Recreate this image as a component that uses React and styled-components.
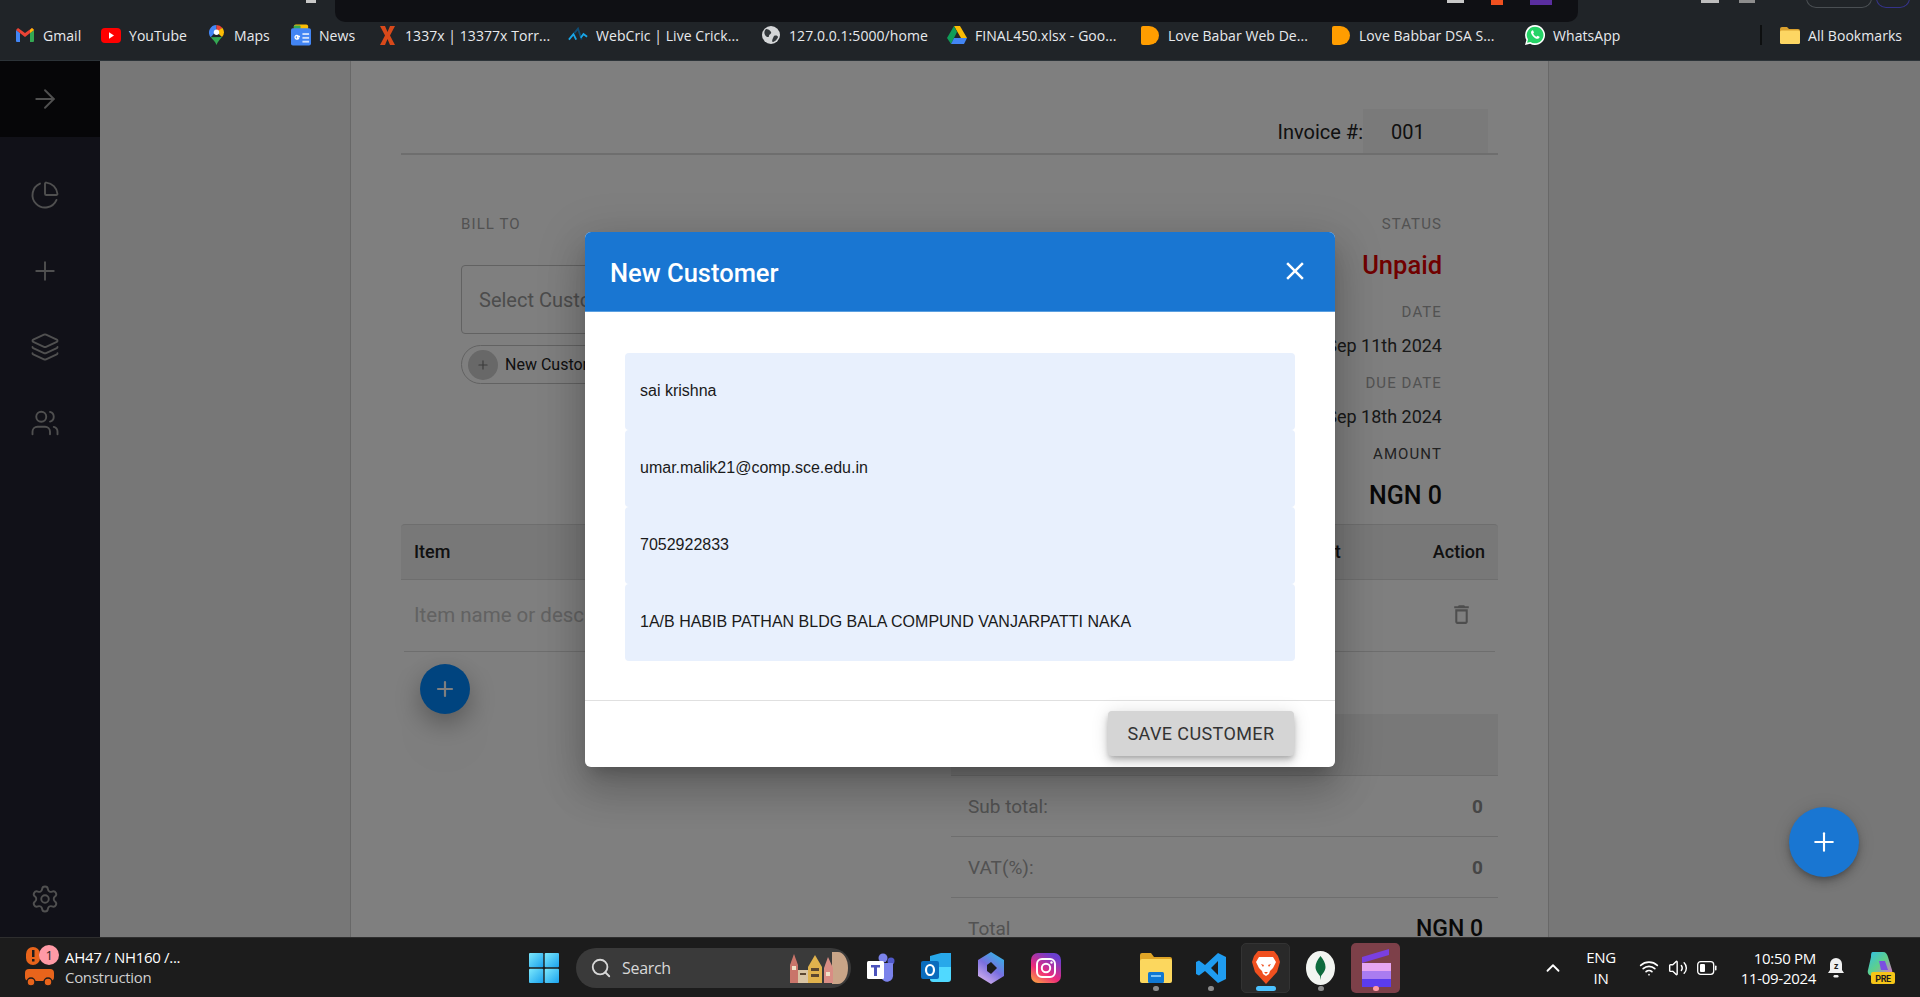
import React from 'react';
import styled, { createGlobalStyle } from 'styled-components';
import { ArrowRight, ChartPie, ChevronUp, Layers, Plus, Search, Settings, Users, Volume2, Wifi } from 'lucide-react';

const GlobalStyle = createGlobalStyle`
  html, body {
    margin: 0;
    padding: 0;
    width: 1920px;
    height: 997px;
    overflow: hidden;
    font-family: Roboto, "Liberation Sans", sans-serif;
  }
  * { box-sizing: border-box; }
`;

const Screen = styled.div`
  width: 1920px;
  height: 997px;
  display: flex;
  flex-direction: column;
  overflow: hidden;
`;

/* browser chrome */
const BrowserBar = styled.header`
  height: 61px;
  flex: none;
  background: #202428;
  border-bottom: 1px solid #2c3338;
  display: flex;
  flex-direction: column;
`;

const TopStrip = styled.div`
  height: 22px;
  flex: none;
  display: flex;
  align-items: flex-start;
  overflow: hidden;
`;

const Omnibox = styled.div`
  width: 1243px;
  height: 22px;
  margin-left: 19px;
  background: #0f1014;
  border-radius: 0 0 10px 10px;
  display: flex;
  gap: 27px;
  padding-left: 1112px;
`;

const StripMark = styled.span`
  display: block;
  flex: none;
  width: ${p => p.$w}px;
  height: ${p => p.$h || 3}px;
  margin-left: ${p => p.$ml || 0}px;
  background: ${p => p.$c};
`;

const Pill = styled.span`
  display: block;
  width: ${p => p.$w}px;
  height: 10px;
  margin: -2px 0 0 ${p => p.$ml}px;
  border: 1px solid ${p => p.$c};
  border-top: 0;
  border-radius: 0 0 10px 10px;
`;

const BookmarkRow = styled.nav`
  height: 38px;
  padding: 0 0 12px 15px;
  display: flex;
  align-items: center;
`;

const Bookmark = styled.a`
  width: ${p => p.$w}px;
  flex: none;
  display: flex;
  align-items: center;
  gap: 8px;
  color: #e8eaed;
  font: 14px "Open Sans", sans-serif;
  letter-spacing: 0.06px;
  white-space: nowrap;
`;

const BookmarkIcon = styled.span`
  width: 20px;
  height: 20px;
  flex: none;
  display: flex;
  align-items: center;
  justify-content: center;
`;

const BarDivider = styled.span`
  width: 2px;
  height: 20px;
  margin: 0 18px 0 0;
  background: #0d0f10;
  flex: none;
`;

/* app */
const Viewport = styled.main`
  position: relative;
  flex: 1;
  min-height: 0;
  display: flex;
  overflow: hidden;
  background: #eeeeee;
`;

const Sidebar = styled.aside`
  width: 100px;
  flex: none;
  background: #222230;
  color: #a0a0a0;
  display: flex;
  flex-direction: column;
  align-items: center;
`;

const SideToggle = styled.div`
  width: 100%;
  height: 76px;
  background: #0c0c10;
  display: flex;
  align-items: center;
  justify-content: center;
  padding-right: 10px;
  margin-bottom: 20px;
`;

const SideItem = styled.div`
  width: 100%;
  height: 76px;
  padding-right: 10px;
  display: flex;
  align-items: center;
  justify-content: center;
`;

const SideFooter = styled(SideItem)`
  margin-top: auto;
`;

const Paper = styled.section`
  width: 1199px;
  margin-left: 250px;
  background: #ffffff;
  border-left: 1px solid #d0d0d0;
  border-right: 1px solid #d0d0d0;
  padding: 48px 50px 0;
  display: flex;
  flex-direction: column;
  flex: none;
`;

const InvoiceHead = styled.div`
  height: 46px;
  flex: none;
  display: flex;
  justify-content: flex-end;
  padding-right: 10px;
  border-bottom: 2px solid #dcdcdc;
  font-size: 20px;
  color: #222;
`;

const InvoiceLabel = styled.span`
  line-height: 46px;
`;

const InvoiceNumber = styled.span`
  width: 125px;
  height: 44px;
  background: #f5f5f5;
  padding-left: 28px;
  line-height: 46px;
`;

const BillRow = styled.div`
  height: 369px;
  flex: none;
  padding: 59px 56px 0 60px;
  display: flex;
  justify-content: space-between;
`;

const BillColumn = styled.div`
  display: flex;
  flex-direction: column;
  align-items: ${p => (p.$right ? 'flex-end' : 'flex-start')};
`;

const Caption = styled.div`
  height: 20px;
  margin-top: ${p => p.$mt || 0}px;
  font-size: 15px;
  line-height: 20px;
  letter-spacing: 1.1px;
  color: ${p => (p.$dark ? '#444' : '#a4a4a4')};
`;

const Status = styled.div`
  margin-top: 14px;
  height: 34px;
  line-height: 34px;
  font-size: 25.5px;
  font-weight: 500;
  color: #e00000;
`;

const DateValue = styled.div`
  margin-top: 11px;
  height: 26px;
  line-height: 26px;
  font-size: 18px;
  color: #333;
`;

const Amount = styled.div`
  margin-top: 15px;
  height: 34px;
  line-height: 34px;
  font-size: 25px;
  font-weight: 500;
  color: #111;
`;

const CustomerSelect = styled.div`
  width: 400px;
  height: 69px;
  margin-top: 31px;
  padding-left: 17px;
  border: 1px solid #c4c4c4;
  border-radius: 4px;
  display: flex;
  align-items: center;
  font-size: 20px;
  color: #999;
`;

const CustomerChip = styled.div`
  height: 39px;
  margin-top: 11px;
  padding: 0 16px 0 6px;
  border: 1px solid #c4c4c4;
  border-radius: 20px;
  display: flex;
  align-items: center;
  gap: 7px;
  font-size: 16px;
  color: #222;
`;

const ChipIcon = styled.span`
  width: 30px;
  height: 30px;
  border-radius: 50%;
  background: #d0d0d0;
  color: #777;
  display: flex;
  align-items: center;
  justify-content: center;
`;

const TableHead = styled.div`
  height: 56px;
  flex: none;
  padding: 0 13px 2px;
  background: #f0f0f0;
  border-top: 1px solid #dcdcdc;
  border-bottom: 1px solid #dcdcdc;
  border-radius: 4px 4px 0 0;
  display: flex;
  align-items: center;
  justify-content: space-between;
  font-size: 18px;
  font-weight: 500;
  color: #222;
`;

const AmountColumn = styled.span`
  margin-left: auto;
  margin-right: 92px;
`;

const TableRow = styled.div`
  height: 72px;
  flex: none;
  margin: 0 3px;
  padding: 0 21px 2px 10px;
  border-bottom: 1px solid #dcdcdc;
  display: flex;
  align-items: center;
  justify-content: space-between;
  font-size: 20.5px;
  color: #c4c4c4;
`;

const TrashIcon = styled.svg`
  width: 25px;
  height: 25px;
  fill: #9c9c9c;
`;

const AddItemButton = styled.div`
  width: 50px;
  height: 50px;
  flex: none;
  margin: 12px 0 0 19px;
  border-radius: 50%;
  background: #0088ff;
  color: #fff;
  display: flex;
  align-items: center;
  justify-content: center;
  box-shadow: 0 10px 26px rgba(0, 0, 0, 0.3), 0 40px 90px rgba(0, 0, 0, 0.08);
`;

const Summary = styled.div`
  width: 547px;
  flex: none;
  align-self: flex-end;
  display: flex;
  flex-direction: column;
`;

const SummaryHead = styled.div`
  height: 62px;
  background: #f0f0f0;
  border-bottom: 1px solid #dcdcdc;
`;

const SummaryRow = styled.div`
  height: 61px;
  flex: none;
  padding: 0 15px 0 17px;
  border-bottom: 1px solid #dcdcdc;
  display: flex;
  align-items: center;
  justify-content: space-between;
  font-size: 19px;
  color: #a4a4a4;
`;

const SummaryValue = styled.span`
  font-weight: 700;
  color: #8c8c8c;
`;

const TotalValue = styled.span`
  font-size: 23px;
  font-weight: 500;
  color: #111;
`;

const Backdrop = styled.div`
  position: absolute;
  inset: 0;
  background: rgba(0, 0, 0, 0.5);
  display: flex;
  align-items: center;
  justify-content: center;
`;

const Dialog = styled.div`
  width: 750px;
  height: 535px;
  background: #fff;
  border-radius: 6px;
  overflow: hidden;
  display: flex;
  flex-direction: column;
  box-shadow: 0 11px 15px -7px rgba(0, 0, 0, 0.2), 0 24px 38px 3px rgba(0, 0, 0, 0.14), 0 9px 46px 8px rgba(0, 0, 0, 0.12);
`;

const DialogHead = styled.div`
  height: 80px;
  flex: none;
  padding: 0 25px;
  background: #1976d2;
  border-bottom: 1px solid #5a9fe0;
  display: flex;
  align-items: center;
  justify-content: space-between;
`;

const DialogTitle = styled.h2`
  margin: 3px 0 0;
  color: #fff;
  font-size: 25.5px;
  font-weight: 500;
`;

const CloseIcon = styled.svg`
  width: 30px;
  height: 30px;
  fill: #fff;
`;

const DialogBody = styled.div`
  flex: 1;
  padding: 41px 40px 0;
  display: flex;
  flex-direction: column;
  border-bottom: 1px solid #e0e0e0;
`;

const Field = styled.div`
  height: 77px;
  flex: none;
  padding: 0 15px;
  background: #e8f0fd;
  border-radius: 4px;
  display: flex;
  align-items: center;
  font: 16px "Liberation Sans", Arial, sans-serif;
  color: #1a1a1a;
`;

const DialogFoot = styled.div`
  height: 66px;
  flex: none;
  padding: 10px 41px 0 0;
  display: flex;
  justify-content: flex-end;
  align-items: flex-start;
`;

const SaveButton = styled.button`
  width: 186px;
  height: 45px;
  border: 0;
  border-radius: 4px;
  background: #d5d5d5;
  color: #333;
  font: 400 18px Roboto, sans-serif;
  letter-spacing: 0.4px;
  box-shadow: 0 3px 5px -1px rgba(0, 0, 0, 0.2), 0 6px 10px 0 rgba(0, 0, 0, 0.14), 0 1px 18px 0 rgba(0, 0, 0, 0.12);
`;

const CreateButton = styled.div`
  position: absolute;
  left: 1789px;
  top: 746px;
  width: 70px;
  height: 70px;
  border-radius: 50%;
  background: #1976d2;
  color: #fff;
  display: flex;
  align-items: center;
  justify-content: center;
  box-shadow: 0 3px 5px -1px rgba(0, 0, 0, 0.2), 0 6px 10px 0 rgba(0, 0, 0, 0.14), 0 1px 18px 0 rgba(0, 0, 0, 0.12);
`;

/* windows taskbar */
const Taskbar = styled.footer`
  height: 60px;
  flex: none;
  background: #1c1c1c;
  border-top: 1px solid #2e2e2e;
  display: flex;
  align-items: center;
  color: #fff;
  font: 15px "Open Sans", sans-serif;
  letter-spacing: -0.3px;
`;

const Weather = styled.div`
  position: relative;
  width: 529px;
  height: 100%;
  flex: none;
  padding-left: 24px;
  display: flex;
  align-items: center;
  gap: 9px;
`;

const WeatherBadge = styled.span`
  position: absolute;
  left: 39px;
  top: 7px;
  width: 20px;
  height: 20px;
  border-radius: 50%;
  background: #ff9aa6;
  color: #222;
  font-size: 13px;
  line-height: 20px;
  text-align: center;
`;

const WeatherText = styled.div`
  display: flex;
  flex-direction: column;
  line-height: 20px;
  padding-bottom: 2px;
`;

const MutedLine = styled.span`
  color: #cfcfcf;
`;

const StartButton = styled.div`
  width: 47px;
  flex: none;
  display: flex;
`;

const SearchBox = styled.div`
  width: 275px;
  height: 40px;
  flex: none;
  padding: 0 3px 0 14px;
  background: #3a3a3a;
  border-radius: 20px;
  display: flex;
  align-items: center;
  gap: 10px;
  color: #d8d8d8;
  font-size: 16px;
`;

const SearchArt = styled.svg`
  width: 60px;
  height: 34px;
  margin-left: auto;
`;

const TaskButtons = styled.div`
  margin-left: 5px;
  display: flex;
  gap: 6px;
`;

const TaskButton = styled.div`
  position: relative;
  width: 49px;
  height: 50px;
  flex: none;
  border-radius: 5px;
  background: ${p => p.$bg || 'transparent'};
  border: 1px solid ${p => p.$border || 'transparent'};
  display: flex;
  align-items: center;
  justify-content: center;
`;

const TaskDot = styled.span`
  position: absolute;
  bottom: 1px;
  left: 50%;
  width: ${p => p.$w || 6}px;
  height: 5px;
  transform: translateX(-50%);
  border-radius: 3px;
  background: ${p => p.$c || '#8a8a8a'};
`;

const Tray = styled.div`
  margin-left: auto;
  padding-right: 25px;
  display: flex;
  align-items: center;
`;

const Lang = styled.div`
  width: 44px;
  margin-left: 15px;
  text-align: center;
  line-height: 21px;
`;

const TrayIcons = styled.div`
  margin-left: 16px;
  display: flex;
  align-items: center;
  gap: 9px;
`;

const Clock = styled.div`
  width: 96px;
  margin-left: 3px;
  text-align: right;
  line-height: 20px;
`;

const TrayEnd = styled.div`
  margin-left: 11px;
  display: flex;
  align-items: center;
  gap: 20px;
`;

/* logos */
const GmailLogo = () => (
  <svg width="18" height="14" viewBox="0 0 18 14">
    <path d="M0 2v11a1 1 0 0 0 1 1h3V5z" fill="#4285f4" />
    <path d="M18 2v11a1 1 0 0 1-1 1h-3V5z" fill="#34a853" />
    <path d="M0 2 9 9l9-7-2-2-7 5-7-5z" fill="#ea4335" />
    <path d="M14 2v3l4-3-2-2z" fill="#fbbc04" />
  </svg>
);

const YoutubeLogo = () => (
  <svg width="20" height="15" viewBox="0 0 20 15">
    <rect width="20" height="15" rx="4" fill="#f00" />
    <path d="M8 4.200v6.600l5-3.300z" fill="#fff" />
  </svg>
);

const MapsLogo = () => (
  <svg width="15" height="20" viewBox="0 0 15 20">
    <path d="M7.500 0A7.500 7.500 0 0 0 1.700 12.200L7.500 6z" fill="#4285f4" />
    <path d="M7.500 0a7.500 7.500 0 0 1 5.800 2.700L7.500 8z" fill="#ea4335" />
    <path d="M13.300 2.700A7.500 7.500 0 0 1 13 12L7.500 7z" fill="#fbbc04" />
    <path d="M1.700 12.200 13 12c-2 2.500-4.500 4.500-5.500 8-1-3.500-3.800-5.300-5.800-7.800z" fill="#34a853" />
    <circle cx="7.500" cy="7.200" r="2.700" fill="#fff" />
  </svg>
);

const NewsLogo = () => (
  <svg width="21" height="22" viewBox="0 0 21 22">
    <rect x="3" y="0" width="15" height="8" rx="2" fill="#fbbc04" />
    <rect x="3" y="1" width="7" height="7" rx="1" fill="#34a853" />
    <rect y="4" width="21" height="18" rx="2" fill="#4285f4" />
    <rect x="12" y="9" width="7" height="2" fill="#cfe0fc" />
    <rect x="12" y="13" width="7" height="2" fill="#cfe0fc" />
    <rect x="12" y="17" width="7" height="2" fill="#cfe0fc" />
    <path d="M9.500 12.500H6.800v1.600h1.300a2 2 0 1 1-.5-2.200" fill="none" stroke="#fff" strokeWidth="1.400" />
  </svg>
);

const XLogo = () => (
  <svg width="15" height="19" viewBox="0 0 15 19">
    <path d="M0 0h5l2.500 6L10 0h5l-5 9.500L15 19h-5l-2.500-6L5 19H0l5-9.500z" fill="#d8491a" />
  </svg>
);

const WebCricLogo = () => (
  <svg width="22" height="16" viewBox="0 0 22 16">
    <path d="M1 13 6 7l3 6" fill="none" stroke="#18a6e8" strokeWidth="2" />
    <path d="M7 6l4-5 4 12" fill="none" stroke="#0e4d75" strokeWidth="2" />
    <path d="M14 11l3-4 4 3" fill="none" stroke="#18a6e8" strokeWidth="2" />
  </svg>
);

const GlobeLogo = () => (
  <svg width="18" height="18" viewBox="0 0 18 18">
    <circle cx="9" cy="9" r="9" fill="#d4d6d8" />
    <path d="M4 3c2 0 4 1 5 3s-2 2-2 4-3 1-4-1-1-4 1-6zM12 10c2-1 4 0 4 1s-3 5-5 5 0-4 1-6z" fill="#33383c" />
  </svg>
);

const DriveLogo = () => (
  <svg width="20" height="18" viewBox="0 0 20 18">
    <path d="M7 0h6l7 12h-6z" fill="#fbbc04" />
    <path d="M7 0l3 6-6 12-4-6z" fill="#0f9d58" />
    <path d="M4 18l3-6h13l-3 6z" fill="#4285f4" />
  </svg>
);

const HalfLogo = () => (
  <svg width="18" height="19" viewBox="0 0 18 19">
    <path d="M0 2a2 2 0 0 1 2-2h6a10 9.500 0 0 1 0 19H2a2 2 0 0 1-2-2z" fill="#ff9d00" />
  </svg>
);

const WhatsappLogo = () => (
  <svg width="20" height="20" viewBox="0 0 20 20">
    <path d="M10 0a10 10 0 0 0-8.600 15L0 20l5.100-1.300A10 10 0 1 0 10 0z" fill="#fff" />
    <path d="M10 1.700a8.300 8.300 0 0 0-7 12.700l-.9 3.400 3.500-.9A8.300 8.300 0 1 0 10 1.700z" fill="#25d366" />
    <path d="M7 5.500c-1.500 1-1.300 3 .5 5.200s4 3.500 5.500 3c1.300-.4 1.800-1.500 1.500-2l-2-1-1 1c-1.500-.5-2.700-1.800-3.300-3.200l.8-1-1-2.200z" fill="#fff" />
  </svg>
);

const FolderLogo = ({ size = 20 }) => (
  <svg width={size} height={size * 0.85} viewBox="0 0 20 17">
    <path d="M0 2a2 2 0 0 1 2-2h5l2 2h9a2 2 0 0 1 2 2v1H0z" fill="#d9a02e" />
    <rect y="3.500" width="20" height="13.500" rx="1.500" fill="#fdd663" />
  </svg>
);

const CarLogo = () => (
  <svg width="32" height="42" viewBox="0 0 32 42">
    <rect x="2" y="0" width="14" height="18" rx="7" fill="#e8641b" />
    <rect x="8" y="3" width="2.500" height="7" fill="#1c1c1c" />
    <rect x="8" y="12" width="2.500" height="2.500" fill="#1c1c1c" />
    <rect x="1" y="22" width="29" height="12" rx="4" fill="#e8641b" />
    <circle cx="7" cy="35" r="4" fill="#e8641b" stroke="#1c1c1c" strokeWidth="1.500" />
    <circle cx="24" cy="35" r="4" fill="#e8641b" stroke="#1c1c1c" strokeWidth="1.500" />
  </svg>
);

const WindowsLogo = () => (
  <svg width="30" height="30" viewBox="0 0 30 30">
    <defs>
      <linearGradient id="winA" x1="0" y1="0" x2="1" y2="1">
        <stop offset="0" stopColor="#7ce8fc" />
        <stop offset="1" stopColor="#1aa2ee" />
      </linearGradient>
    </defs>
    <rect width="14.300" height="14.300" rx="1" fill="url(#winA)" />
    <rect x="15.700" width="14.300" height="14.300" rx="1" fill="url(#winA)" />
    <rect y="15.700" width="14.300" height="14.300" rx="1" fill="url(#winA)" />
    <rect x="15.700" y="15.700" width="14.300" height="14.300" rx="1" fill="url(#winA)" />
  </svg>
);

const CastleArt = () => (
  <SearchArt viewBox="0 0 60 34">
    <path d="M50 1a10 16 0 0 1 0 32h-6V1z" fill="#c9a588" />
    <path d="M2 14 6 3l4 11v18H2z" fill="#c9756a" />
    <rect x="4" y="15" width="4" height="4" fill="#f0e2c8" />
    <rect x="10" y="19" width="10" height="13" fill="#d8c4a4" />
    <path d="M20 16l7-12 7 12v16H20z" fill="#e0b24d" />
    <path d="M36 17l4-11 5 11v15h-9z" fill="#d98d84" />
    <rect x="23" y="17" width="8" height="3" fill="#5a4630" />
    <rect x="23" y="23" width="8" height="3" fill="#5a4630" />
    <rect x="12" y="22" width="6" height="2" fill="#5a4630" />
    <rect x="38" y="21" width="4" height="4" fill="#f0e2c8" />
  </SearchArt>
);

const TeamsLogo = () => (
  <svg width="28" height="30" viewBox="0 0 28 30">
    <circle cx="16" cy="5" r="4.500" fill="#7b83eb" />
    <circle cx="24" cy="8" r="3.500" fill="#5059c9" />
    <path d="M10 10h16v11a6 6 0 0 1-12 3h-4z" fill="#7b83eb" />
    <rect x="0" y="8" width="17" height="18" rx="1.500" fill="#fff" />
    <path d="M4 12h9v2.500H10V23H7v-8.500H4z" fill="#4b53bc" />
  </svg>
);

const OutlookLogo = () => (
  <svg width="30" height="30" viewBox="0 0 30 30">
    <path d="M9 3 20 0h10v22H9z" fill="#28a8ea" />
    <path d="M9 14h21v12a3 3 0 0 1-3 3H12a3 3 0 0 1-3-3z" fill="#50d9ff" />
    <rect x="0" y="8" width="18" height="18" rx="2" fill="#0a6cbd" />
    <ellipse cx="9" cy="17" rx="4" ry="5" fill="none" stroke="#fff" strokeWidth="2.200" />
  </svg>
);

const CopilotLogo = () => (
  <svg width="28" height="32" viewBox="0 0 28 32">
    <defs>
      <linearGradient id="bingA" x1="0.800" y1="0" x2="0.200" y2="1">
        <stop offset="0" stopColor="#2fb6e6" />
        <stop offset="0.500" stopColor="#7a6fe0" />
        <stop offset="1" stopColor="#d8b4ee" />
      </linearGradient>
    </defs>
    <path d="M14 0 27 8v16l-13 8-13-8V8z" fill="url(#bingA)" />
    <path d="M14 10l6 6-6 6-4-3v-6z" fill="#1c1c1c" />
  </svg>
);

const InstagramLogo = () => (
  <svg width="30" height="30" viewBox="0 0 30 30">
    <defs>
      <linearGradient id="instaA" x1="0" y1="1" x2="0.600" y2="0">
        <stop offset="0" stopColor="#fdb03a" />
        <stop offset="0.450" stopColor="#ee2a7b" />
        <stop offset="1" stopColor="#6a3fd0" />
      </linearGradient>
    </defs>
    <rect width="30" height="30" rx="7" fill="url(#instaA)" />
    <rect x="6" y="6" width="18" height="18" rx="5" fill="none" stroke="#fff" strokeWidth="2" />
    <circle cx="15" cy="15" r="4.200" fill="none" stroke="#fff" strokeWidth="2" />
    <circle cx="20.500" cy="9.500" r="1.200" fill="#fff" />
  </svg>
);

const ExplorerLogo = () => (
  <svg width="32" height="30" viewBox="0 0 32 30">
    <path d="M0 2a2 2 0 0 1 2-2h9l3 4h16a2 2 0 0 1 2 2v4H0z" fill="#e0a526" />
    <rect y="6" width="32" height="24" rx="2" fill="#fcd75e" />
    <rect x="8" y="19" width="16" height="11" rx="1.500" fill="#0f78d4" />
    <rect x="11" y="22" width="10" height="2" fill="#7ec4f5" />
  </svg>
);

const CodeLogo = () => (
  <svg width="30" height="30" viewBox="0 0 30 30">
    <path d="M22 0 30 4v22l-8 4-13-12-6 4.500-3-1.500V9l3-1.500L9 12zM22 8l-7 7 7 7z" fill="#1f9cf0" fillRule="evenodd" />
  </svg>
);

const BraveLogo = () => (
  <svg width="28" height="33" viewBox="0 0 28 33">
    <path d="M6 0h16l4 5 2 6-3 10-11 12L3 21 0 11l2-6z" fill="#f0501f" />
    <path d="M7 6h14l3 5-3 6-3 3-1 3-3 2-3-2-1-3-3-3-3-6z" fill="#fff" />
    <path d="M9 13l3 1-1 2zM19 13l-3 1 1 2zM12 21h4l-2 2z" fill="#f0501f" />
  </svg>
);

const MongoLogo = () => (
  <svg width="29" height="34" viewBox="0 0 29 34">
    <ellipse cx="14.500" cy="17" rx="14.500" ry="17" fill="#f2f5f1" />
    <path d="M14.500 5c3 4 5 7 5 11s-3 7-4.500 9l-.5 4-.5-4c-1.500-2-4.500-5-4.500-9s2-7 5-11z" fill="#0e6b3d" />
  </svg>
);

const ClapperLogo = () => (
  <svg width="30" height="38" viewBox="0 0 30 38">
    <path d="M1 8 28 0v6L1 14z" fill="#7a3fe0" />
    <rect x="1" y="14" width="29" height="8" fill="#e6a6f2" />
    <rect x="1" y="22" width="29" height="8" fill="#a97cf0" />
    <rect x="1" y="30" width="29" height="8" fill="#5b3cee" />
  </svg>
);

const BatteryIcon = () => (
  <svg width="20" height="16" viewBox="0 0 20 16">
    <rect x="0.700" y="1.700" width="16" height="12.600" rx="3" fill="none" stroke="#fff" strokeWidth="1.300" />
    <rect x="3" y="4" width="5" height="8" rx="1" fill="#fff" />
    <rect x="18" y="5.500" width="1.500" height="5" rx="0.700" fill="#fff" />
  </svg>
);

const SnoozeBell = () => (
  <svg width="18" height="22" viewBox="0 0 18 22">
    <path d="M9 1a6 6 0 0 0-6 6v6l-2 3h16l-2-3V7a6 6 0 0 0-6-6z" fill="#f0f0f0" />
    <rect x="6.500" y="18" width="5" height="2.500" rx="1.200" fill="#f0f0f0" />
    <text x="9" y="12" textAnchor="middle" fontSize="9" fontWeight="700" fill="#1c1c1c">z</text>
  </svg>
);

const PreLogo = () => (
  <svg width="30" height="32" viewBox="0 0 30 32">
    <defs>
      <linearGradient id="copA" x1="0" y1="0" x2="1" y2="1">
        <stop offset="0" stopColor="#2fc0e8" />
        <stop offset="0.500" stopColor="#5fd08a" />
        <stop offset="1" stopColor="#e86ad0" />
      </linearGradient>
    </defs>
    <path d="M8 0h10c3 0 4 2 5 5l4 13c1 3-1 6-4 6H8c-4 0-6-3-5-6L6 5C6 2 6 0 8 0z" fill="url(#copA)" />
    <path d="M14 9h6l3 9h-7z" fill="#7b4fe0" />
    <rect x="6" y="20" width="24" height="12" rx="2" fill="#f5c518" />
    <text x="18" y="29.500" textAnchor="middle" fontSize="9" fontWeight="700" fontFamily="Roboto, sans-serif" fill="#1c1c1c">PRE</text>
  </svg>
);

const bookmarks = [
  { label: 'Gmail', w: 86, icon: <GmailLogo /> },
  { label: 'YouTube', w: 105, icon: <YoutubeLogo /> },
  { label: 'Maps', w: 85, icon: <MapsLogo /> },
  { label: 'News', w: 86, icon: <NewsLogo /> },
  { label: '1337x | 13377x Torr...', w: 191, icon: <XLogo /> },
  { label: 'WebCric | Live Crick...', w: 193, icon: <WebCricLogo /> },
  { label: '127.0.0.1:5000/home', w: 186, icon: <GlobeLogo /> },
  { label: 'FINAL450.xlsx - Goo...', w: 193, icon: <DriveLogo /> },
  { label: 'Love Babar Web De...', w: 191, icon: <HalfLogo /> },
  { label: 'Love Babbar DSA S...', w: 194, icon: <HalfLogo /> },
  { label: 'WhatsApp', w: 235, icon: <WhatsappLogo /> },
];

const customerFields = [
  'sai krishna',
  'umar.malik21@comp.sce.edu.in',
  '7052922833',
  '1A/B HABIB PATHAN BLDG BALA COMPUND VANJARPATTI NAKA',
];

const App = () => (
  <Screen>
    <GlobalStyle />
    <BrowserBar>
      <TopStrip>
        <StripMark $w={10} $c="#c8c8c8" $ml={306} />
        <Omnibox>
          <StripMark $w={17} $c="#c8c8c8" />
          <StripMark $w={12} $c="#f0501f" $h={5} />
          <StripMark $w={22} $c="#5a2ea0" $h={5} />
        </Omnibox>
        <StripMark $w={18} $c="#bdbdbd" $ml={123} />
        <StripMark $w={16} $c="#8d8d8d" $ml={20} />
        <Pill $w={66} $ml={51} $c="#4a4f53" />
        <Pill $w={34} $ml={4} $c="#35338a" />
      </TopStrip>
      <BookmarkRow>
        {bookmarks.map(b => (
          <Bookmark key={b.label} $w={b.w}>
            <BookmarkIcon>{b.icon}</BookmarkIcon>
            {b.label}
          </Bookmark>
        ))}
        <BarDivider />
        <Bookmark $w={130}>
          <BookmarkIcon>
            <FolderLogo />
          </BookmarkIcon>
          All Bookmarks
        </Bookmark>
      </BookmarkRow>
    </BrowserBar>

    <Viewport>
      <Sidebar>
        <SideToggle>
          <ArrowRight size={30} strokeWidth={1.5} />
        </SideToggle>
        <SideItem>
          <ChartPie size={30} strokeWidth={1.5} />
        </SideItem>
        <SideItem>
          <Plus size={30} strokeWidth={1.5} />
        </SideItem>
        <SideItem>
          <Layers size={30} strokeWidth={1.5} />
        </SideItem>
        <SideItem>
          <Users size={30} strokeWidth={1.5} />
        </SideItem>
        <SideFooter>
          <Settings size={30} strokeWidth={1.5} />
        </SideFooter>
      </Sidebar>

      <Paper>
        <InvoiceHead>
          <InvoiceLabel>Invoice #:</InvoiceLabel>
          <InvoiceNumber>001</InvoiceNumber>
        </InvoiceHead>
        <BillRow>
          <BillColumn>
            <Caption>BILL TO</Caption>
            <CustomerSelect>Select Customer</CustomerSelect>
            <CustomerChip>
              <ChipIcon>
                <Plus size={14} strokeWidth={2} />
              </ChipIcon>
              New Customer
            </CustomerChip>
          </BillColumn>
          <BillColumn $right>
            <Caption>STATUS</Caption>
            <Status>Unpaid</Status>
            <Caption $mt={20}>DATE</Caption>
            <DateValue>Sep 11th 2024</DateValue>
            <Caption $mt={14}>DUE DATE</Caption>
            <DateValue>Sep 18th 2024</DateValue>
            <Caption $mt={14} $dark>AMOUNT</Caption>
            <Amount>NGN 0</Amount>
          </BillColumn>
        </BillRow>
        <TableHead>
          <span>Item</span>
          <AmountColumn>Amount</AmountColumn>
          <span>Action</span>
        </TableHead>
        <TableRow>
          <span>Item name or description</span>
          <TrashIcon viewBox="0 0 24 24">
            <path d="M6 19c0 1.100.9 2 2 2h8c1.100 0 2-.9 2-2V7H6v12zM8 9h8v10H8V9zm7.500-5l-1-1h-5l-1 1H5v2h14V4z" />
          </TrashIcon>
        </TableRow>
        <AddItemButton>
          <Plus size={24} strokeWidth={2.2} />
        </AddItemButton>
        <Summary>
          <SummaryHead />
          <SummaryRow>
            <span>Sub total:</span>
            <SummaryValue>0</SummaryValue>
          </SummaryRow>
          <SummaryRow>
            <span>VAT(%):</span>
            <SummaryValue>0</SummaryValue>
          </SummaryRow>
          <SummaryRow>
            <span>Total</span>
            <TotalValue>NGN 0</TotalValue>
          </SummaryRow>
        </Summary>
      </Paper>

      <Backdrop>
        <Dialog>
          <DialogHead>
            <DialogTitle>New Customer</DialogTitle>
            <CloseIcon viewBox="0 0 24 24">
              <path d="M19 6.410 17.590 5 12 10.590 6.410 5 5 6.410 10.590 12 5 17.590 6.410 19 12 13.410 17.590 19 19 17.590 13.410 12z" />
            </CloseIcon>
          </DialogHead>
          <DialogBody>
            {customerFields.map(text => (
              <Field key={text}>{text}</Field>
            ))}
          </DialogBody>
          <DialogFoot>
            <SaveButton>SAVE CUSTOMER</SaveButton>
          </DialogFoot>
        </Dialog>
      </Backdrop>

      <CreateButton>
        <Plus size={30} strokeWidth={1.7} />
      </CreateButton>
    </Viewport>

    <Taskbar>
      <Weather>
        <CarLogo />
        <WeatherBadge>1</WeatherBadge>
        <WeatherText>
          <span>AH47 / NH160 /...</span>
          <MutedLine>Construction</MutedLine>
        </WeatherText>
      </Weather>
      <StartButton>
        <WindowsLogo />
      </StartButton>
      <SearchBox>
        <Search size={22} strokeWidth={2} />
        Search
        <CastleArt />
      </SearchBox>
      <TaskButtons>
        <TaskButton><TeamsLogo /></TaskButton>
        <TaskButton><OutlookLogo /></TaskButton>
        <TaskButton><CopilotLogo /></TaskButton>
        <TaskButton><InstagramLogo /></TaskButton>
        <TaskButton />
        <TaskButton><ExplorerLogo /><TaskDot /></TaskButton>
        <TaskButton><CodeLogo /><TaskDot /></TaskButton>
        <TaskButton $bg="#292929" $border="#333"><BraveLogo /><TaskDot $w={20} $c="#4cc2ff" /></TaskButton>
        <TaskButton><MongoLogo /><TaskDot /></TaskButton>
        <TaskButton $bg="#7d4049"><ClapperLogo /><TaskDot $c="#ff9aa6" /></TaskButton>
      </TaskButtons>
      <Tray>
        <ChevronUp size={22} strokeWidth={2} />
        <Lang>ENG<br />IN</Lang>
        <TrayIcons>
          <Wifi size={20} strokeWidth={2} />
          <Volume2 size={20} strokeWidth={1.7} />
          <BatteryIcon />
        </TrayIcons>
        <Clock>10:50 PM<br />11-09-2024</Clock>
        <TrayEnd>
          <SnoozeBell />
          <PreLogo />
        </TrayEnd>
      </Tray>
    </Taskbar>
  </Screen>
);

export default App;
